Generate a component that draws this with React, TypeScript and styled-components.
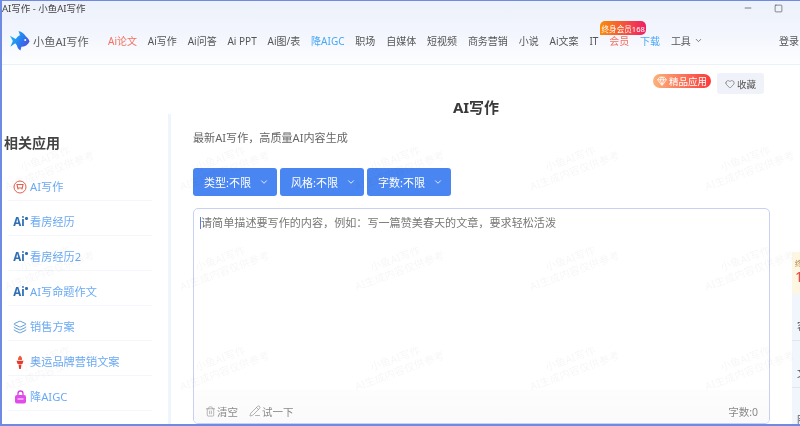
import React from "react";
import styled, { createGlobalStyle } from "styled-components";
import { Trash2, PencilLine, ChevronDown, Heart, Gem, Minus, Square, Layers } from "lucide-react";

const Global = createGlobalStyle`
  html, body { margin: 0; padding: 0; background: #fff; }
  body { font-family: "Noto Sans", "Noto Sans CJK SC", sans-serif; }
  * { box-sizing: border-box; }
`;

const Frame = styled.div`
  position: relative;
  width: 800px;
  height: 426px;
  overflow: hidden;
  background: #fff;
  border-style: solid;
  border-color: #6f8ae3;
  border-width: 1px 0 2px 2px;
  filter: blur(0.45px);
`;

const Header = styled.header`
  height: 64px;
  display: flex;
  flex-direction: column;
  background: linear-gradient(180deg, #edf1fb 0%, #f3f6fd 55%, #fdfeff 100%);
  border-bottom: 1px solid #eaf0f7;
`;

const TitleBar = styled.div`
  height: 14px;
  display: flex;
  align-items: center;
  justify-content: space-between;
  font-size: 9.5px;
  color: #444;
`;

const WindowControls = styled.div`
  display: flex;
  align-items: center;
  gap: 21px;
  padding-right: 17px;
  color: #444;
`;

const Nav = styled.nav`
  flex: 1;
  display: flex;
  align-items: center;
  padding: 2px 0 0 7px;
  font-size: 10px;
`;

const Logo = styled.div`
  display: flex;
  align-items: center;
  gap: 3px;
  width: 99px;
  font-size: 11.2px;
  color: #606060;
`;

const NavList = styled.div`
  display: flex;
  align-items: center;
  gap: 10.85px;
`;

const NavLink = styled.span<{ $tone?: string }>`
  position: relative;
  display: inline-flex;
  align-items: center;
  gap: 3px;
  white-space: nowrap;
  color: ${(p) => p.$tone ?? "#555"};
`;

const PromoBadge = styled.span`
  position: absolute;
  left: -9px;
  top: -12px;
  height: 14px;
  width: 46px;
  display: flex;
  align-items: center;
  justify-content: center;
  font-size: 7.6px;
  color: #fff;
  white-space: nowrap;
  border-radius: 5px 5px 5px 0;
  background: linear-gradient(90deg, #f98d0c, #ee1f66);
`;

const Login = styled.span`
  margin-left: auto;
  padding-right: 1px;
  color: #555;
  white-space: nowrap;
`;

const TagBar = styled.div`
  height: 31px;
  display: flex;
  justify-content: flex-end;
  align-items: flex-start;
  gap: 6px;
  padding: 8px 36px 0 0;
`;

const FineBadge = styled.span`
  height: 14px;
  margin-top: 1px;
  width: 58px;
  display: flex;
  align-items: center;
  justify-content: center;
  gap: 2px;
  font-size: 9.5px;
  color: #fff;
  border-radius: 7px;
  background: linear-gradient(90deg, #fbb27a, #fb3a3a);
`;

const FavButton = styled.span`
  height: 21px;
  width: 47px;
  display: flex;
  align-items: center;
  justify-content: center;
  gap: 2px;
  font-size: 9.5px;
  color: #555;
  border-radius: 3px;
  background: #f0f2f9;
`;

const PageTitle = styled.h1`
  margin: 0;
  height: 18px;
  padding-left: 150px;
  text-align: center;
  font-size: 15px;
  line-height: 22px;
  font-weight: 700;
  color: #3a3a3a;
`;

const Body = styled.div`
  display: flex;
  height: 310px;
`;

const Sidebar = styled.aside`
  width: 169px;
  flex: none;
  padding: 20px 16px 0 2px;
  border-right: 3px solid #eff5fc;
`;

const SideHeading = styled.h2`
  margin: 0 0 14px;
  font-size: 14px;
  line-height: 18px;
  font-weight: 700;
  color: #444;
`;

const SideItem = styled.div`
  height: 35px;
  margin-left: 4px;
  padding: 13px 0 0 5px;
  display: flex;
  align-items: flex-start;
  gap: 3px;
  font-size: 11.2px;
  line-height: 16px;
  color: #6aa9f4;
  white-space: nowrap;
  border-bottom: 1px solid #f3f6fa;
`;

const IconSlot = styled.span`
  width: 14px;
  height: 16px;
  flex: none;
  display: flex;
  align-items: center;
  justify-content: center;
`;

const AiMark = styled.span`
  position: relative;
  font-size: 11.5px;
  font-weight: 700;
  color: #2f6fb5;
  line-height: 16px;
  margin-left: -2px;
  &::after {
    content: "";
    position: absolute;
    right: -3px;
    top: 3px;
    width: 2.5px;
    height: 2.5px;
    border-radius: 50%;
    background: #2f6fb5;
  }
`;

const Main = styled.main`
  flex: 1;
  padding: 15px 30px 0 22px;
  display: flex;
  flex-direction: column;
`;

const Subtitle = styled.p`
  margin: 0;
  height: 39px;
  padding-top: 1px;
  font-size: 11.1px;
  line-height: 16px;
  color: #666;
`;

const Filters = styled.div`
  display: flex;
  gap: 3px;
  margin-bottom: 12px;
`;

const FilterButton = styled.button`
  width: 84px;
  height: 28px;
  padding: 0 0 0 3px;
  display: flex;
  align-items: center;
  justify-content: center;
  gap: 8px;
  border: 0;
  border-radius: 3px;
  background: #4a86f2;
  color: #fff;
  font: inherit;
  font-size: 11px;
`;

const EditorBox = styled.div`
  flex: 1;
  display: flex;
  flex-direction: column;
  border: 1px solid #c7d1f5;
  border-radius: 5px;
  overflow: hidden;
`;

const Placeholder = styled.div`
  flex: 1;
  padding: 6px 0 0 6px;
  font-size: 11.1px;
  line-height: 16px;
  color: #777;
  white-space: nowrap;
  border: 0;
  &::before {
    content: "";
    display: inline-block;
    width: 1px;
    height: 12px;
    vertical-align: -2px;
    background: #5c7fd0;
  }
`;

const EditorFooter = styled.div`
  height: 33px;
  display: flex;
  align-items: center;
  gap: 11px;
  padding: 9px 11px 0 11px;
  font-size: 10.5px;
  color: #8a8a8a;
  background: linear-gradient(180deg, #fdfdfd, #fafafa);
`;

const FooterAction = styled.span`
  display: flex;
  align-items: center;
  gap: 1px;
`;

const Count = styled.span`
  margin-left: auto;
`;

const FloatPanel = styled.aside`
  position: absolute;
  left: 790px;
  top: 251px;
  width: 120px;
  height: 173px;
  background: #f1f6fd;
  font-size: 10px;
  color: #555;
`;

const FloatHead = styled.div`
  height: 42px;
  padding: 7px 0 0 3px;
  background: #fdf6e3;
  font-size: 7px;
  line-height: 10px;
  color: #b08040;
`;

const FloatPrice = styled.div`
  font-size: 14px;
  line-height: 16px;
  color: #e8483f;
`;

const FloatRow = styled.div`
  height: 47px;
  padding: 25px 0 0 5px;
  line-height: 14px;
  white-space: nowrap;
  border-bottom: 1px solid #dfe6ee;
`;

const Watermarks = styled.div`
  position: absolute;
  left: -42px;
  top: 114px;
  display: grid;
  grid-template-columns: repeat(5, 175px);
  grid-auto-rows: 100px;
  pointer-events: none;
`;

const Mark = styled.div`
  display: flex;
  flex-direction: column;
  align-items: center;
  justify-content: center;
  transform: rotate(-20deg);
  font-size: 10.5px;
  line-height: 13px;
  color: rgba(0, 0, 0, 0.04);
  white-space: nowrap;
`;

const Fish = () => (
  <svg width="21" height="21" viewBox="0 0 22 22">
    <defs>
      <linearGradient id="fishFill" x1="0" y1="0.2" x2="1" y2="0.8">
        <stop offset="0" stopColor="#19c0f5" />
        <stop offset="0.55" stopColor="#2a7bf0" />
        <stop offset="1" stopColor="#5a45d8" />
      </linearGradient>
    </defs>
    <path
      d="M1 6 L7 9.5 C8.5 7.5 10 6 11.5 5.5 L10 1 C13.5 1.5 16 4 17.5 6.5 C19.5 8 21 10 21.5 12 C20 15.5 16.5 17.5 13 17.5 L12 21.5 C10 20.5 8.8 18.5 8.2 16 L6.5 14 L1.5 17.5 L4 11.5 Z"
      fill="url(#fishFill)"
    />
    <circle cx="17" cy="10.5" r="1" fill="#fff" />
  </svg>
);

const CartRing = () => (
  <svg width="14" height="14" viewBox="0 0 14 14" fill="none" stroke="#e4604f">
    <circle cx="7" cy="7" r="6" strokeWidth="1" />
    <path d="M4 4.5h6l-.7 3.5H4.7z M5 8v1.5 M9 8v1.5" strokeWidth="1.1" />
  </svg>
);

const Torch = () => (
  <svg width="10" height="15" viewBox="0 0 10 15">
    <path d="M5 0.5c2 1.5 2.5 3 1.8 4.5H3.2C2.6 3.5 3.4 2 5 0.5z" fill="#ef5a3c" />
    <path d="M1.5 5.8h7L7.4 9H2.6z" fill="#e33b2e" />
    <path d="M3.5 9.6h3L5.8 14H4.2z" fill="#e33b2e" />
  </svg>
);

const Stamp = () => (
  <svg width="13" height="14" viewBox="0 0 13 14">
    <path d="M4 5V3.5a2.5 2.5 0 0 1 5 0V5" fill="none" stroke="#d63fe0" strokeWidth="1.3" />
    <rect x="1" y="5" width="11" height="8.5" rx="2" fill="#e04ce8" />
    <path d="M3.5 9h6" stroke="#f6c6f8" strokeWidth="1.4" />
  </svg>
);

const navItems: { label: string; tone?: string }[] = [
  { label: "Ai论文", tone: "#f4705f" },
  { label: "Ai写作" },
  { label: "Ai问答" },
  { label: "Ai PPT" },
  { label: "Ai图/表" },
  { label: "降AIGC", tone: "#4aa8f5" },
  { label: "职场" },
  { label: "自媒体" },
  { label: "短视频" },
  { label: "商务营销" },
  { label: "小说" },
  { label: "Ai文案" },
  { label: "IT" },
];

const sideItems: { label: string; icon: React.ReactNode }[] = [
  { label: "AI写作", icon: <CartRing /> },
  { label: "看房经历", icon: <AiMark>Ai</AiMark> },
  { label: "看房经历2", icon: <AiMark>Ai</AiMark> },
  { label: "AI写命题作文", icon: <AiMark>Ai</AiMark> },
  { label: "销售方案", icon: <Layers size={14} color="#4b8fd8" strokeWidth={1.5} /> },
  { label: "奥运品牌营销文案", icon: <Torch /> },
  { label: "降AIGC", icon: <Stamp /> },
];

export default function App() {
  return (
    <Frame>
      <Global />
      <Header>
        <TitleBar>
          <span>AI写作 - 小鱼AI写作</span>
          <WindowControls>
            <Minus size={10} strokeWidth={1.6} />
            <Square size={9} strokeWidth={1.6} />
          </WindowControls>
        </TitleBar>
        <Nav>
          <Logo>
            <Fish />
            小鱼AI写作
          </Logo>
          <NavList>
            {navItems.map((n) => (
              <NavLink key={n.label} $tone={n.tone}>
                {n.label}
              </NavLink>
            ))}
            <NavLink $tone="#f4705f">
              会员
              <PromoBadge>终身会员168</PromoBadge>
            </NavLink>
            <NavLink $tone="#4aa8f5">下载</NavLink>
            <NavLink>
              工具
              <ChevronDown size={9} strokeWidth={2} />
            </NavLink>
          </NavList>
          <Login>登录</Login>
        </Nav>
      </Header>
      <TagBar>
        <FineBadge>
          <Gem size={10} strokeWidth={2} />
          精品应用
        </FineBadge>
        <FavButton>
          <Heart size={10} strokeWidth={1.4} />
          收藏
        </FavButton>
      </TagBar>
      <PageTitle>AI写作</PageTitle>
      <Body>
        <Sidebar>
          <SideHeading>相关应用</SideHeading>
          {sideItems.map((s) => (
            <SideItem key={s.label}>
              <IconSlot>{s.icon}</IconSlot>
              {s.label}
            </SideItem>
          ))}
        </Sidebar>
        <Main>
          <Subtitle>最新AI写作，高质量AI内容生成</Subtitle>
          <Filters>
            {["类型:不限", "风格:不限", "字数:不限"].map((f) => (
              <FilterButton key={f}>
                {f}
                <ChevronDown size={10} strokeWidth={2} />
              </FilterButton>
            ))}
          </Filters>
          <EditorBox>
            <Placeholder>请简单描述要写作的内容，例如：写一篇赞美春天的文章，要求轻松活泼</Placeholder>
            <EditorFooter>
              <FooterAction>
                <Trash2 size={11} strokeWidth={1.3} />
                清空
              </FooterAction>
              <FooterAction>
                <PencilLine size={12} strokeWidth={1.3} />
                试一下
              </FooterAction>
              <Count>字数:0</Count>
            </EditorFooter>
          </EditorBox>
        </Main>
      </Body>
      <FloatPanel>
        <FloatHead>
          终身会员
          <FloatPrice>168</FloatPrice>
        </FloatHead>
        <FloatRow>客服</FloatRow>
        <FloatRow>文案</FloatRow>
        <FloatRow>图表</FloatRow>
      </FloatPanel>
      <Watermarks>
        {Array.from({ length: 15 }, (_, i) => (
          <Mark key={i}>
            <span>小鱼AI写作</span>
            <span>AI生成内容仅供参考</span>
          </Mark>
        ))}
      </Watermarks>
    </Frame>
  );
}
